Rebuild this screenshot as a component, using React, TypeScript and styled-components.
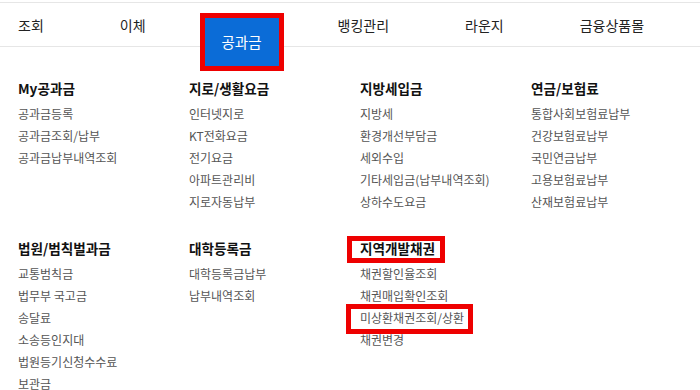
import React from "react";
import styled, { createGlobalStyle } from "styled-components";

const Global = createGlobalStyle`
  html, body { margin: 0; padding: 0; background: #fff; }
  body { font-family: "Noto Sans CJK KR", "Noto Sans", sans-serif; color: #222; }
  * { box-sizing: border-box; }
`;

const Page = styled.div`
  width: 700px;
  height: 390px;
  overflow: hidden;
  padding-top: 2px;
`;

const Nav = styled.nav`
  display: flex;
  height: 45px;
  border-top: 1px solid #e6e6e6;
  border-bottom: 1px solid #e6e6e6;
  padding-left: 18px;
`;

const NavItem = styled.div`
  display: flex;
  align-items: center;
  padding: 0 38px;
  &:first-child { padding-left: 0; }
  font-size: 14px;
  color: #222;
  white-space: nowrap;
`;

const NavLabel = styled.span<{ $active?: boolean }>`
  ${(p) =>
    p.$active &&
    `
    position: relative;
    top: 17px;
    z-index: 2;
    display: flex;
    align-items: center;
    height: 48px;
    padding: 0 17px;
    margin: 0 -17px;
    background: #0b6cd7;
    color: #fff;
    font-size: 14.5px;
    outline: 5px solid #ee0000;
  `}
`;

const Menu = styled.div`
  display: grid;
  grid-template-columns: repeat(4, 171px);
  row-gap: 25px;
  padding: 31px 0 0 18px;
`;

const Section = styled.section`
  display: flex;
  flex-direction: column;
  align-items: flex-start;
`;

const Heading = styled.h3<{ $marked?: boolean }>`
  position: relative;
  margin: 0 0 5px;
  font-size: 13.6px;
  line-height: 20px;
  font-weight: 700;
  color: #111;
  white-space: nowrap;
  ${(p) =>
    p.$marked &&
    `
    &::after {
      content: "";
      position: absolute;
      left: -13px;
      right: -10px;
      top: -2px;
      bottom: -5px;
      border: 5px solid #ee0000;
    }
  `}
`;

const Item = styled.a<{ $marked?: boolean }>`
  position: relative;
  display: block;
  font-size: 12px;
  line-height: 22px;
  color: #555;
  text-decoration: none;
  white-space: nowrap;
  ${(p) =>
    p.$marked &&
    `
    &::after {
      content: "";
      position: absolute;
      left: -14px;
      right: -9px;
      top: -3px;
      bottom: -5px;
      border: 5px solid #ee0000;
    }
  `}
`;

type Sec = { title: string; items: string[]; markTitle?: boolean; markItem?: string };

const sections: Sec[] = [
  { title: "My공과금", items: ["공과금등록", "공과금조회/납부", "공과금납부내역조회"] },
  { title: "지로/생활요금", items: ["인터넷지로", "KT전화요금", "전기요금", "아파트관리비", "지로자동납부"] },
  { title: "지방세입금", items: ["지방세", "환경개선부담금", "세외수입", "기타세입금(납부내역조회)", "상하수도요금"] },
  { title: "연금/보험료", items: ["통합사회보험료납부", "건강보험료납부", "국민연금납부", "고용보험료납부", "산재보험료납부"] },
  { title: "법원/범칙벌과금", items: ["교통범칙금", "법무부 국고금", "송달료", "소송등인지대", "법원등기신청수수료", "보관금"] },
  { title: "대학등록금", items: ["대학등록금납부", "납부내역조회"] },
  {
    title: "지역개발채권",
    items: ["채권할인율조회", "채권매입확인조회", "미상환채권조회/상환", "채권변경"],
    markTitle: true,
    markItem: "미상환채권조회/상환",
  },
];

const navItems = ["조회", "이체", "공과금", "뱅킹관리", "라운지", "금융상품몰"];

export default function App() {
  return (
    <Page>
      <Global />
      <Nav>
        {navItems.map((n) => (
          <NavItem key={n}>
            <NavLabel $active={n === "공과금"}>{n}</NavLabel>
          </NavItem>
        ))}
      </Nav>
      <Menu>
        {sections.map((s) => (
          <Section key={s.title}>
            <Heading $marked={s.markTitle}>{s.title}</Heading>
            {s.items.map((i) => (
              <Item key={i} $marked={s.markItem === i}>
                {i}
              </Item>
            ))}
          </Section>
        ))}
      </Menu>
    </Page>
  );
}
